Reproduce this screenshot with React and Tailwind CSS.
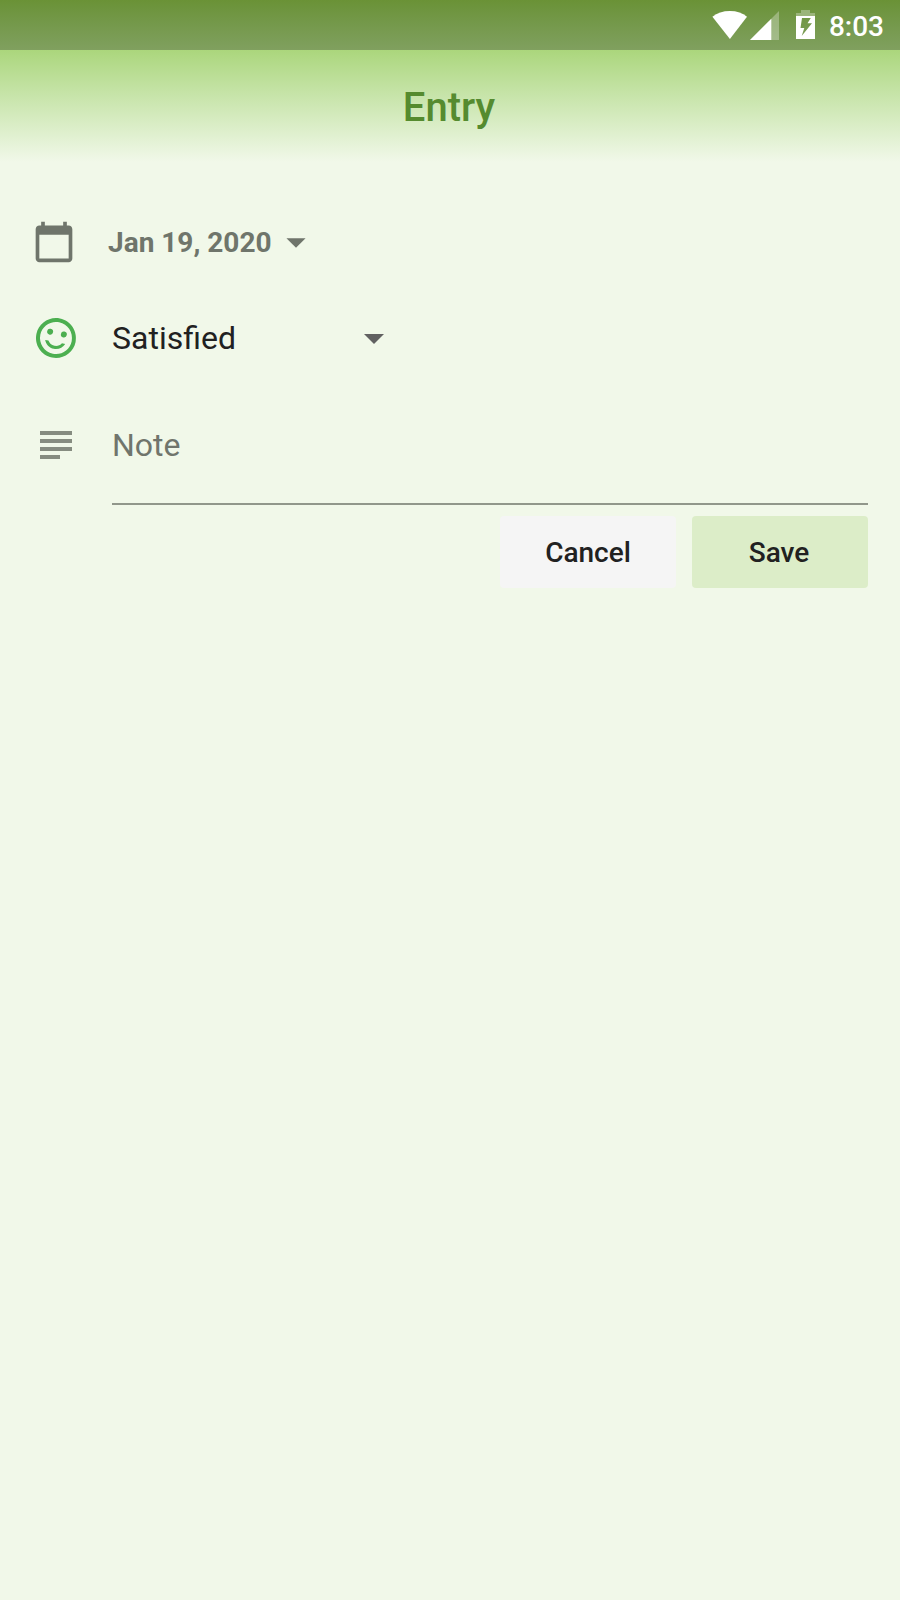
import React from "react";

function StatusBar() {
  return (
    <div className="flex h-[50px] items-start justify-end bg-linear-to-b from-[#6a9236] to-[#80a05f] pr-[16px] text-white">
      <svg className="mt-[11px] h-[28px] w-[35px]" viewBox="0 0 35 28" fill="currentColor">
        <path d="M17.9 28 L0.4 5.8 C5 2 11 0 17.9 0 S30.7 2 35 5.8 Z" />
      </svg>
      <svg className="mt-[11px] ml-[3px] h-[29px] w-[29px]" viewBox="0 0 29 29" fill="currentColor">
        <path d="M29 0 V29 H0 Z" opacity="0.3" />
        <path d="M21.3 7.7 V29 H0 Z" />
      </svg>
      <svg className="mt-[10px] ml-[17px] h-[29px] w-[19px]" viewBox="0 0 19 29" fill="currentColor">
        <path d="M5 0 H14 V3 H19 V6 H0 V3 H5 Z" opacity="0.3" />
        <path fillRule="evenodd" d="M0 6 H19 V29 H0 Z M6 8 L4.5 18 H8.3 L5.7 26 L16 13.2 H11.5 L14.8 8 Z" />
      </svg>
      <span className="mt-[10px] ml-[14px] text-[28px] leading-[33px] font-medium">8:03</span>
    </div>
  );
}

function DropArrow({ className }) {
  return (
    <svg className={className} viewBox="0 0 24 24" fill="currentColor">
      <path d="M7 10l5 5 5-5z" />
    </svg>
  );
}

export default function App() {
  return (
    <div className="flex h-[1600px] w-[900px] flex-col bg-[#f1f8e9] font-['Roboto',sans-serif]">
      <StatusBar />
      <header className="flex h-[112px] items-center justify-center bg-linear-to-b from-[#abd67c] to-[#f1f8e9] pt-[4px] pr-[2px]">
        <h1 className="text-[40px] leading-[48px] font-medium text-[#558b2f]">Entry</h1>
      </header>
      <main className="flex flex-col px-[32px]">
        <button className="mt-[58px] flex h-[44px] items-center self-start text-[#6f756b]">
          <svg className="size-[44px]" viewBox="0 0 24 24" fill="currentColor">
            <path d="M20 3h-1V1h-2v2H7V1H5v2H4c-1.1 0-2 .9-2 2v16c0 1.1.9 2 2 2h16c1.1 0 2-.9 2-2V5c0-1.1-.9-2-2-2zm0 18H4V8h16v13z" />
          </svg>
          <span className="ml-[32px] w-[165px] pt-[2px] text-left text-[28px] leading-[32px] font-bold whitespace-nowrap">Jan 19, 2020</span>
          <DropArrow className="size-[46px]" />
        </button>
        <button className="mt-[50px] flex h-[48px] items-center self-start text-[#212121]">
          <svg className="size-[48px] rotate-[11.46deg] text-[#4caf50]" viewBox="0 0 24 24" fill="currentColor">
            <circle cx="15.5" cy="9.5" r="1.5" />
            <circle cx="8.5" cy="9.5" r="1.5" />
            <path d="M11.99 2C6.47 2 2 6.48 2 12s4.47 10 9.99 10C17.52 22 22 17.52 22 12S17.52 2 11.99 2zM12 20c-4.42 0-8-3.58-8-8s3.58-8 8-8 8 3.58 8 8-3.58 8-8 8zm0-4c-1.48 0-2.75-.81-3.45-2H6.88c.8 2.05 2.79 3.5 5.12 3.5s4.32-1.45 5.12-3.5h-1.67c-.7 1.19-1.97 2-3.45 2z" />
          </svg>
          <span className="ml-[32px] w-[238px] text-left text-[32px] leading-[38px]">Satisfied</span>
          <DropArrow className="size-[48px] text-[#616161]" />
        </button>
        <div className="mt-[34px] flex">
          <div className="mt-[35px] ml-[8px] flex h-[28px] w-[32px] flex-col justify-between">
            <div className="h-[4px] bg-[#868c80]" />
            <div className="h-[4px] bg-[#868c80]" />
            <div className="h-[4px] bg-[#868c80]" />
            <div className="h-[4px] w-[20px] bg-[#868c80]" />
          </div>
          <div className="ml-[40px] h-[109px] flex-1 border-b-2 border-[#91978b] pt-[30px] text-[32px] leading-[38px] text-[#70756c]">Note</div>
        </div>
        <div className="mt-[11px] flex justify-end gap-[16px] text-[28px] font-medium text-[#212121]">
          <button className="h-[72px] w-[176px] rounded-[4px] bg-[#f5f5f5] pt-[2px]">Cancel</button>
          <button className="h-[72px] w-[176px] rounded-[4px] bg-[#dcedc8] pt-[2px] pr-[2px]">Save</button>
        </div>
      </main>
    </div>
  );
}
